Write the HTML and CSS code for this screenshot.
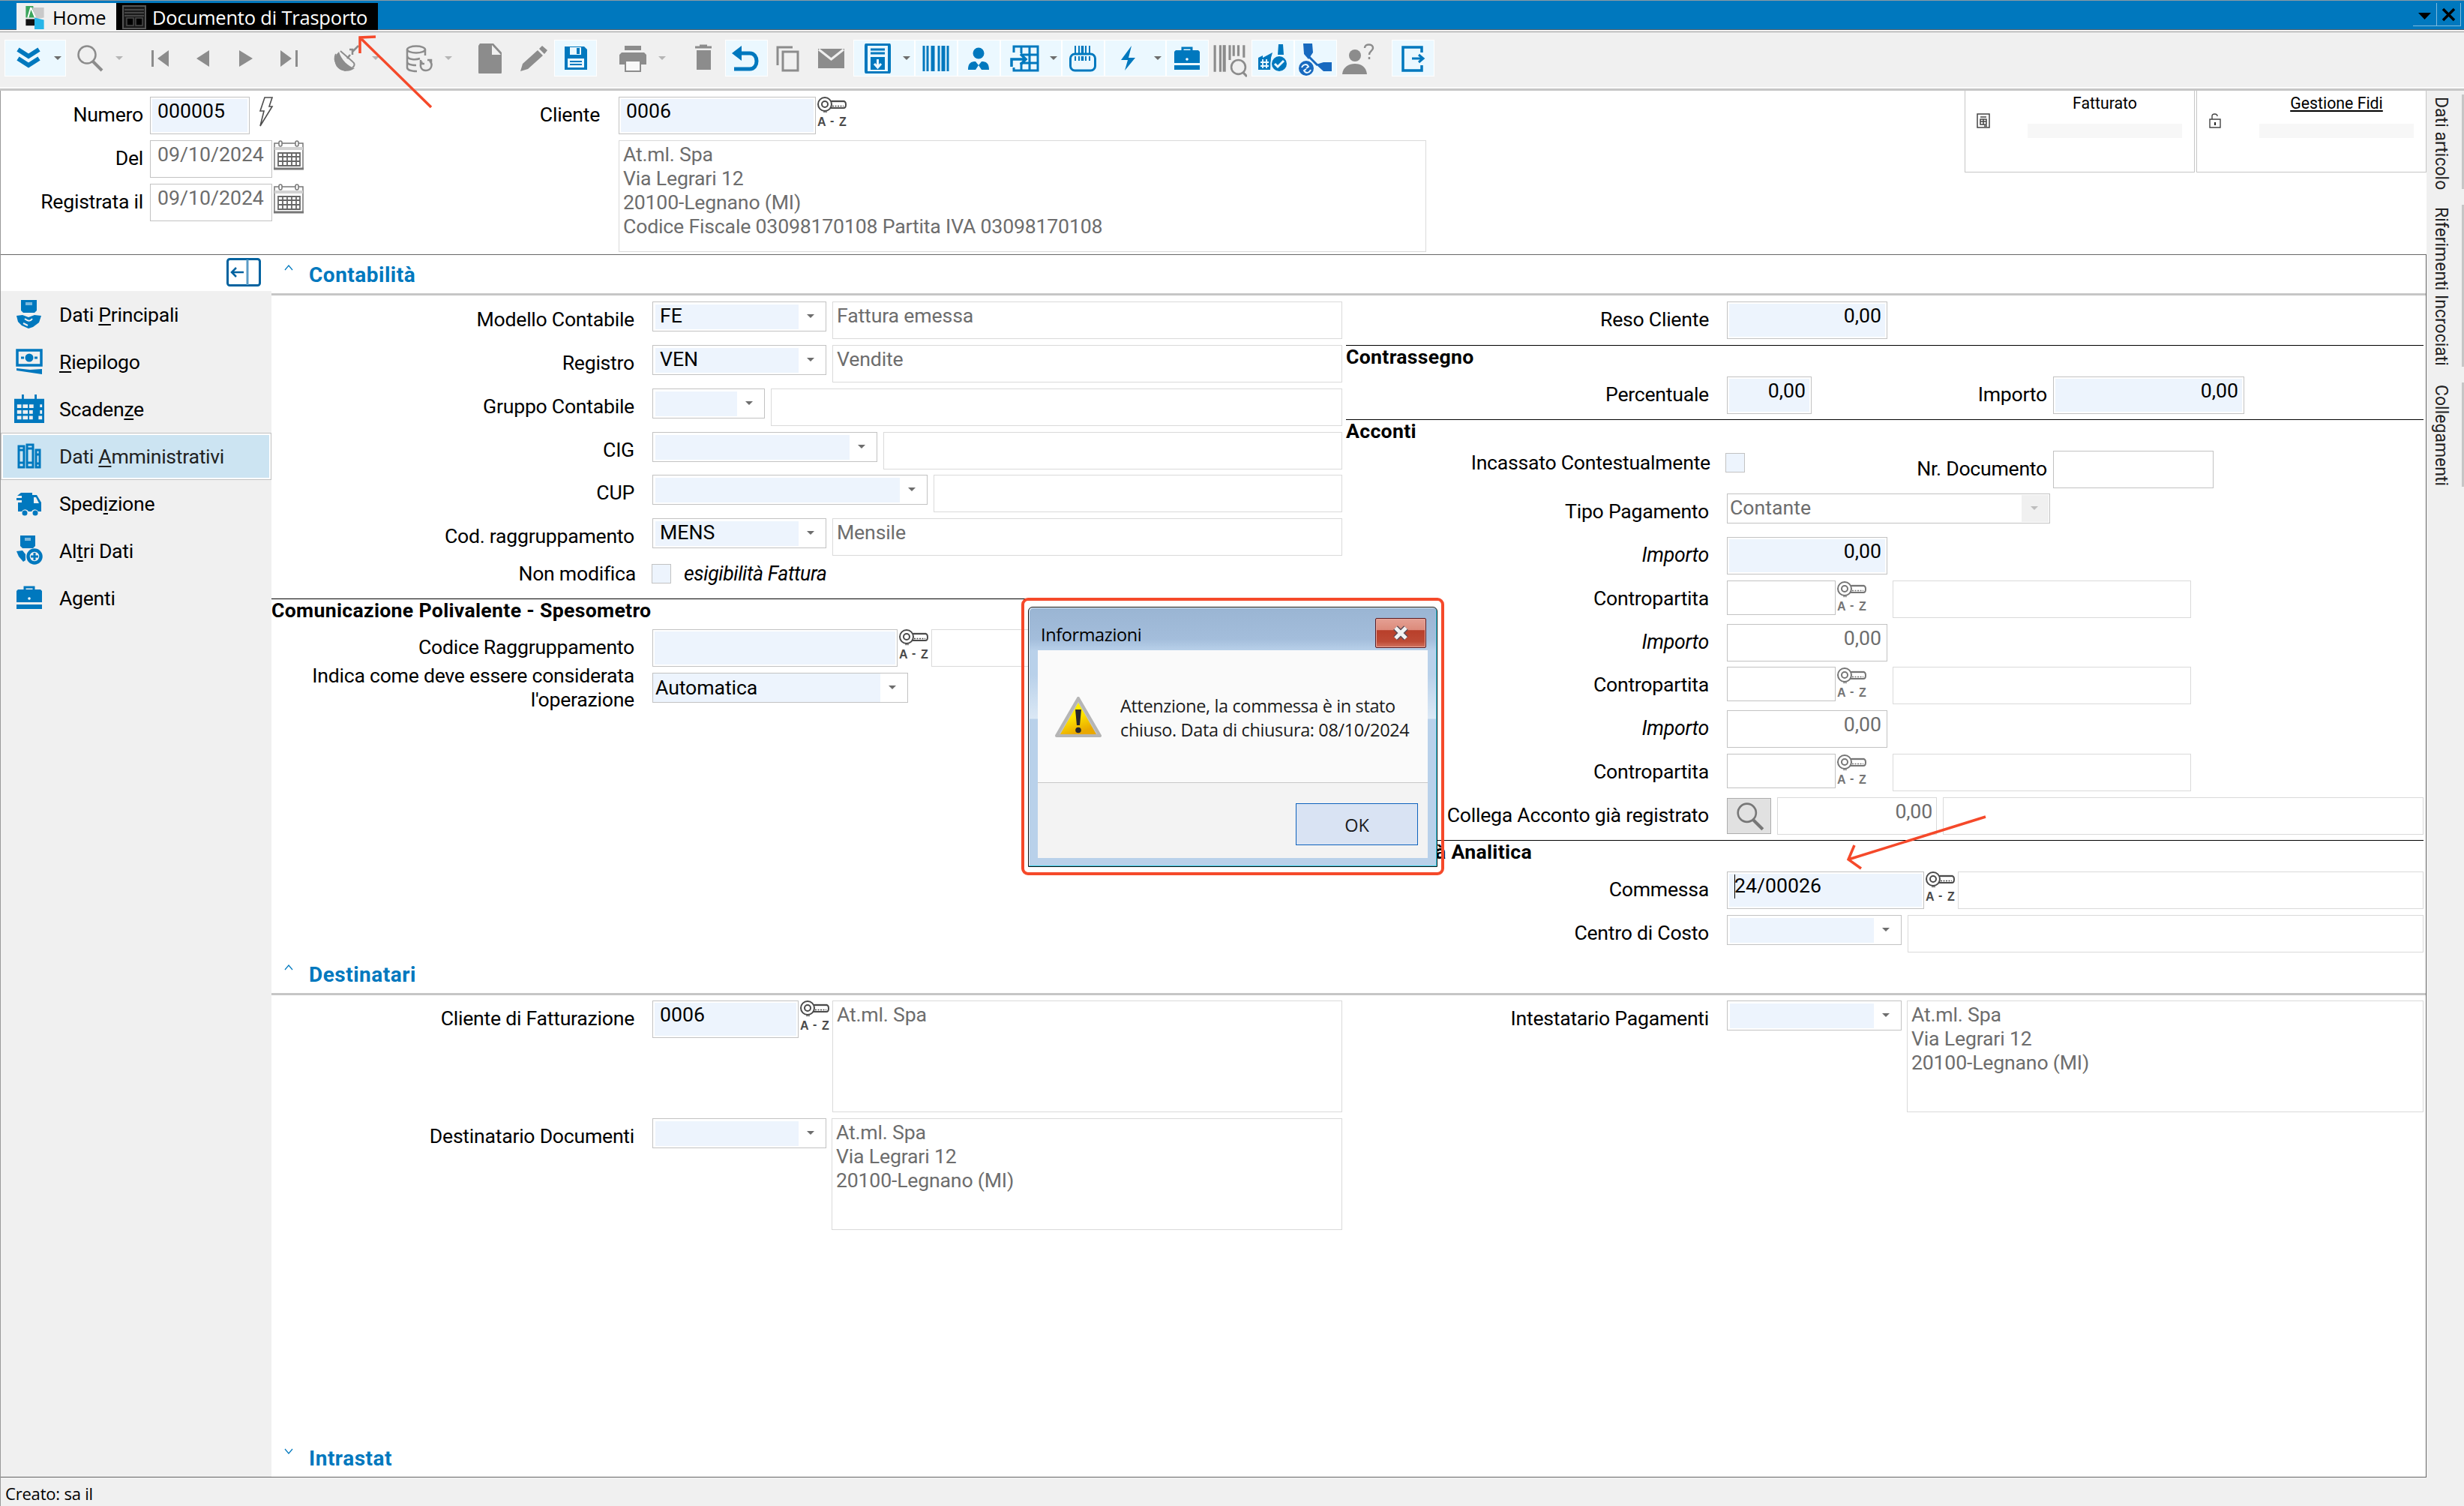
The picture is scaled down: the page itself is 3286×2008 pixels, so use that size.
FILE: index.html
```html
<!DOCTYPE html>
<html lang="it">
<head>
  <meta charset="UTF-8" />
  <title>Documento di Trasporto</title>
  <link rel="stylesheet" href="styles.css">
</head>
<body>

  <!-- icon sprites -->
  <svg class="sprites" width="0" height="0">
    <symbol id="i-chevrons" viewBox="0 0 40 40"><path d="M6 8l14 9 14-9M6 20l14 9 14-9" fill="none" stroke="currentColor" stroke-width="6"/></symbol>
    <symbol id="i-search" viewBox="0 0 40 40"><circle cx="16" cy="15" r="11.5" fill="none" stroke="currentColor" stroke-width="2.5"/><path d="M24 24l12 12" stroke="currentColor" stroke-width="4"/></symbol>
    <symbol id="i-first" viewBox="0 0 40 40"><path d="M8 9h3v22H8zM31 9v22L16 20z" fill="currentColor"/></symbol>
    <symbol id="i-prev" viewBox="0 0 40 40"><path d="M28 9v22L11 20z" fill="currentColor"/></symbol>
    <symbol id="i-next" viewBox="0 0 40 40"><path d="M11 9v22l18-11z" fill="currentColor"/></symbol>
    <symbol id="i-last" viewBox="0 0 40 40"><path d="M29 9h3v22h-3zM9 9v22l15-11z" fill="currentColor"/></symbol>
    <symbol id="i-dish" viewBox="0 0 40 40"><path d="M10 11C2 18 3 30 12 35c7 3 14 2 19-2-8-2-18-11-21-22z" fill="currentColor"/><path d="M6 14c-4 9 2 20 13 22M12 10l16 14c4 3 3 6 0 8" fill="none" stroke="currentColor" stroke-width="2"/><path d="M21 20l4-5M24 8l4 0 0 7M28 11l8-8" fill="none" stroke="currentColor" stroke-width="2.5"/></symbol>
    <symbol id="i-db" viewBox="0 0 40 40"><g fill="none" stroke="currentColor" stroke-width="2.5"><ellipse cx="16" cy="8" rx="12" ry="4.500"/><path d="M4 8v24c0 3 5 5 13 5M28 8v8M4 16c0 6 12 6 17 4M4 24c0 4 6 5 12 5"/><path d="M24 24c-4 5-2 12 5 12s10-8 5-13M22 22v5h5M36 27v-5h-5"/></g></symbol>
    <symbol id="i-file" viewBox="0 0 40 40"><path d="M6 0h18l11 12v26a3 3 0 0 1-3 3H7a3 3 0 0 1-3-3V3z" fill="currentColor"/><path d="M22 2v13h12z" fill="#f0f0f0"/></symbol>
    <symbol id="i-pencil" viewBox="0 0 40 40"><path d="M3 37l3-10L26 9l7 7-20 18zM28 7l4-4 7 6-4 5z" fill="currentColor"/></symbol>
    <symbol id="i-save" viewBox="0 0 40 40"><path d="M5 4h26l4 4v27H5z" fill="currentColor"/><path d="M12 5h15v10H12zM9 20h22v12H9z" fill="#ebf8ff"/><path d="M21 6h4v8h-4zM12 23h16v2H12zM12 27h16v2H12z" fill="currentColor"/></symbol>
    <symbol id="i-print" viewBox="0 0 40 40"><path d="M9 3h22v6H9zM5 12h30l3 3v13h-7v-6H9v6H2V15z" fill="currentColor"/><path d="M10 23h20v14H10z" fill="#f8f8f8" stroke="currentColor" stroke-width="2"/></symbol>
    <symbol id="i-trash" viewBox="0 0 40 40"><path d="M9 5h22M15 3h10" stroke="currentColor" stroke-width="3"/><path d="M11 9h19v26H11z" fill="currentColor"/></symbol>
    <symbol id="i-undo" viewBox="0 0 40 40"><path d="M8 13h17c12 0 12 21 0 21H4" fill="none" stroke="currentColor" stroke-width="5"/><path d="M14 3v20L1 13z" fill="currentColor"/></symbol>
    <symbol id="i-copy" viewBox="0 0 40 40"><path d="M5 29V5h20M12 11h20v25H12z" fill="none" stroke="currentColor" stroke-width="3"/></symbol>
    <symbol id="i-mail" viewBox="0 0 40 40"><path d="M2 7h35v26H2z" fill="currentColor"/><path d="M3 8l16.500 13L36 8" fill="none" stroke="#f0f0f0" stroke-width="3"/></symbol>
    <symbol id="i-form" viewBox="0 0 40 40"><rect x="5" y="1" width="31" height="38" rx="2" fill="none" stroke="currentColor" stroke-width="4"/><path d="M11 8h19M11 13h19" stroke="currentColor" stroke-width="3"/><path d="M11 18h19v17H11z" fill="currentColor"/><path d="M20.500 21v10M16 27l4.500 5 4.500-5" stroke="#ebf8ff" stroke-width="3" fill="none"/></symbol>
    <symbol id="i-barcode" viewBox="0 0 40 40"><path d="M4 3v34M9 3v34M24 3v34M36 3v34" stroke="currentColor" stroke-width="3"/><path d="M16 3v34M30 3v34" stroke="currentColor" stroke-width="5"/></symbol>
    <symbol id="i-person" viewBox="0 0 40 40"><ellipse cx="20" cy="13" rx="7.500" ry="7.500" fill="currentColor"/><path d="M6 35c0-9 4-11 10-11l4 5 4-5c6 0 10 2 10 11H24l-4-6-4 6z" fill="currentColor"/></symbol>
    <symbol id="i-grid" viewBox="0 0 40 40"><path d="M6 12V4h32v32H6v-4M16 4v9M27 4v32M38 15H15M38 26H17M16 25v11" fill="none" stroke="currentColor" stroke-width="3"/><path d="M3 31V21h18M15 14l7 7-7 7" fill="none" stroke="currentColor" stroke-width="3.500"/></symbol>
    <symbol id="i-bag" viewBox="0 0 40 40"><path d="M10 3v11M15 3v11M24 3v11M29 3v11M10 17v6M15 17v6M24 17v6M29 17v6" stroke="currentColor" stroke-width="2"/><path d="M19.500 3v11M19.500 17v6" stroke="currentColor" stroke-width="3.500"/><rect x="3.500" y="14" width="33" height="22" rx="6" fill="none" stroke="currentColor" stroke-width="3"/></symbol>
    <symbol id="i-bolt" viewBox="0 0 40 40"><path d="M24 3L10 22h9l-4 14 14-17h-9z" fill="currentColor"/></symbol>
    <symbol id="i-case" viewBox="0 0 40 40"><path d="M14 10V6h12v4" fill="none" stroke="currentColor" stroke-width="3"/><path d="M5 9h30l2 2v15H3V11zM3 29h34v6H3z" fill="currentColor"/><circle cx="20" cy="21" r="1.800" fill="#fff"/></symbol>
    <symbol id="i-barsearch" viewBox="0 0 44 44"><path d="M3 3v34M10 3v34M22 3v19M27 3v14M33 3v14M40 3v16" stroke="currentColor" stroke-width="3"/><path d="M15 3v34" stroke="currentColor" stroke-width="4"/><circle cx="33" cy="31" r="9" fill="#f0f0f0" stroke="currentColor" stroke-width="2.500"/><path d="M39 38l5 5" stroke="currentColor" stroke-width="3"/></symbol>
    <symbol id="i-factory" viewBox="0 0 40 40"><path d="M1 35V19l6-3v3l13-7-2 7-1 16zM28 1h6l1 14h-8z" fill="currentColor"/><path d="M4 25h11M4 30h11M7 21v12M12 21v12" stroke="#ebf8ff" stroke-width="1.800"/><circle cx="29" cy="27" r="11.500" fill="#ebf8ff"/><circle cx="29" cy="27" r="10" fill="currentColor"/><path d="M23 27l4 4 8-8" fill="none" stroke="#ebf8ff" stroke-width="3"/></symbol>
    <symbol id="i-flow" viewBox="0 0 46 46"><path d="M7 1h12l1 12-6 9-6-7z" fill="currentColor"/><path d="M24 29l10-3h11v12H34z" fill="currentColor"/><path d="M14 18l12 12" stroke="currentColor" stroke-width="3"/><circle cx="11" cy="34" r="10" fill="currentColor"/><path d="M5 33c2-5 7-5 9-1l-3 2M17 36c-2 5-7 5-9 1l3-2" fill="none" stroke="#ebf8ff" stroke-width="2"/></symbol>
    <symbol id="i-ask" viewBox="0 0 46 44"><circle cx="19" cy="16" r="8" fill="currentColor"/><path d="M2 41c1-10 9-14 17-14s15 4 16 14z" fill="currentColor"/><path d="M32 6c0-6 11-6 11 0 0 4-5 4-5 9M38 18v3" fill="none" stroke="currentColor" stroke-width="2.500"/></symbol>
    <symbol id="i-exit" viewBox="0 0 40 40"><path d="M32 12V5H7v31h25v-7" fill="none" stroke="currentColor" stroke-width="3.500"/><path d="M19 20h14M28 15l6 5-6 5" fill="none" stroke="currentColor" stroke-width="3"/></symbol>

    <symbol id="i-key" viewBox="0 0 40 40"><g fill="none" stroke="currentColor" stroke-width="2"><circle cx="10" cy="10" r="9"/><circle cx="10" cy="10" r="4"/><path d="M18 6h17c4 0 4 9 0 9H18"/></g><path d="M19 6h17M8 20h5" stroke="currentColor" stroke-width="2.500" opacity="0.600"/><path d="M20 12.500h15" stroke="currentColor" stroke-width="1.500" stroke-dasharray="2 1.500"/><text x="0" y="39" class="key-text">A</text><text x="17" y="37" class="key-text">-</text><text x="29" y="39" class="key-text">Z</text></symbol>
    <symbol id="i-flash" viewBox="0 0 20 40"><path d="M8 1h10l-4 12h4L2 39l5-20H2z" fill="none" stroke="#4d4d4d" stroke-width="1.600"/></symbol>
    <symbol id="i-date" viewBox="0 0 40 40"><path d="M1 4h38v34H1z" fill="#fff" stroke="#777" stroke-width="1.500"/><path d="M1 9h38v4H1z" fill="#d2d2d2"/><path d="M0 38h40" stroke="#777" stroke-width="3"/><rect x="7" y="1" width="4" height="7" rx="2" fill="#fff" stroke="#777" stroke-width="1.500"/><rect x="29" y="1" width="4" height="7" rx="2" fill="#fff" stroke="#777" stroke-width="1.500"/><path d="M6 17h29v17H6zM6 22h29M6 28h29M12 17v17M18 17v17M24 17v17M30 17v17" fill="none" stroke="#666" stroke-width="1.800"/></symbol>

    <symbol id="n-main" viewBox="0 0 40 40"><path d="M9 1h21v14l-3 3H12l-3-3z" fill="currentColor"/><path d="M15 4h9v4h-9z" fill="#7db9de"/><path d="M3 22l8-1 8 3 8-3 9 1-3 9-8 6-6 2-9-4-5-5z" fill="currentColor"/><path d="M14 26c5 4 8 3 10 0M12 32l6 3" stroke="#f0f0f0" stroke-width="2" fill="none"/></symbol>
    <symbol id="n-cash" viewBox="0 0 40 40"><path d="M4 5h32v20H4z" fill="none" stroke="currentColor" stroke-width="3.500"/><circle cx="20" cy="15" r="5.500" fill="currentColor"/><path d="M9 15h4M27 15h4" stroke="currentColor" stroke-width="3"/><path d="M3 29l18 2 16-1v7L3 32z" fill="currentColor"/></symbol>
    <symbol id="n-cal" viewBox="0 0 42 42"><path d="M0 7h42v34H0z" fill="currentColor"/><path d="M12 1v8M30 1v8" stroke="currentColor" stroke-width="3"/><path d="M4 15h6v5H4zM12 15h7v5h-7zM21 15h6v5h-6zM4 23h6v5H4zM12 23h7v5h-7zM21 23h5v5h-5zM4 31h6v5H4zM12 31h7v5h-7zM21 31h5v5h-5zM36 15h3v4h-3zM36 23h3v5h-3zM34 31h5v5h-5z" fill="#f0f0f0"/></symbol>
    <symbol id="n-binders" viewBox="0 0 40 40"><g fill="none" stroke="currentColor" stroke-width="3"><path d="M6 7h7v28H6zM17 5h8v30h-8z"/><path d="M29 12h5v23h-5z"/></g><path d="M6 12h7M6 29h7M17 10h8M17 29h8M29 18h5M29 30h5" stroke="currentColor" stroke-width="3"/></symbol>
    <symbol id="n-truck" viewBox="0 0 40 40"><path d="M9 6h15v3h6l6 10v12h-4a5 5 0 0 0-9 0h-4a5 5 0 0 0-9 0H5V19h5v-3H3v-3h7v-3H4z" fill="currentColor"/><path d="M26 12h3l4 8h-7z" fill="#f0f0f0"/><circle cx="14" cy="33" r="3.500" fill="currentColor"/><circle cx="28" cy="33" r="3.500" fill="currentColor"/></symbol>
    <symbol id="n-other" viewBox="0 0 40 40"><path d="M8 0h20v14l-3 3H11l-3-3z" fill="currentColor"/><path d="M14 3h8v4h-8z" fill="#7db9de"/><path d="M3 21l8-1 4 5v8l-3 2-6-7z" fill="currentColor"/><circle cx="27" cy="28" r="8.500" fill="#f0f0f0" stroke="currentColor" stroke-width="4.500"/><path d="M27 23v10M22 28h10" stroke="currentColor" stroke-width="3"/></symbol>
  </svg>

  <div class="titlebar">
    <div class="tab tab-home">
      <svg class="logo" viewBox="0 0 25 32"><path d="M0 0h10l6 16H0z" fill="#3ca55c"/><path d="M9 2h16v14l-12 2z" fill="#c9c9c9"/><path d="M7 2l-4 14M7 2l6 14" stroke="#fff" stroke-width="2"/><path d="M0 18h12v9H0z" fill="#111"/><path d="M12 16l13 3v13H12z" fill="#27b5e8"/></svg>
      Home
    </div>
    <div class="tab tab-doc">
      <svg class="tab-icon" viewBox="0 0 32 32"><path d="M1 1h30v30H1z" fill="#1a1a1a" stroke="#555" stroke-width="2"/><path d="M3 6h26M3 10h26M3 14h26" stroke="#555" stroke-width="1.500"/><path d="M6 17h9v10H6zM18 17h9v10h-9z" fill="#000" stroke="#4a4a4a" stroke-width="1.500"/></svg>
      Documento di Trasporto
    </div>
    <div class="window-buttons">
      <span class="win-btn"><svg viewBox="0 0 30 30"><path d="M7 13h17l-8.500 9z" fill="#000"/></svg></span>
      <span class="win-btn"><svg viewBox="0 0 30 30"><path d="M8 8l15 15M23 8L8 23" stroke="#000" stroke-width="3.500"/></svg></span>
    </div>
  </div>

  <div class="toolbar">
    <span class="tool on drop"><svg><use href="#i-chevrons"/></svg></span>
    <span class="tool drop"><svg><use href="#i-search"/></svg></span>
    <span class="sep"></span>
    <span class="tool"><svg><use href="#i-first"/></svg></span>
    <span class="tool"><svg><use href="#i-prev"/></svg></span>
    <span class="tool"><svg><use href="#i-next"/></svg></span>
    <span class="tool"><svg><use href="#i-last"/></svg></span>
    <span class="sep"></span>
    <span class="tool drop"><svg><use href="#i-dish"/></svg></span>
    <span class="sep"></span>
    <span class="tool drop"><svg><use href="#i-db"/></svg></span>
    <span class="sep"></span>
    <span class="tool"><svg><use href="#i-file"/></svg></span>
    <span class="tool"><svg><use href="#i-pencil"/></svg></span>
    <span class="tool on"><svg><use href="#i-save"/></svg></span>
    <span class="sep"></span>
    <span class="tool drop"><svg><use href="#i-print"/></svg></span>
    <span class="sep"></span>
    <span class="tool"><svg><use href="#i-trash"/></svg></span>
    <span class="tool on"><svg><use href="#i-undo"/></svg></span>
    <span class="tool"><svg><use href="#i-copy"/></svg></span>
    <span class="tool"><svg><use href="#i-mail"/></svg></span>
    <span class="tool on drop"><svg><use href="#i-form"/></svg></span>
    <span class="tool on"><svg><use href="#i-barcode"/></svg></span>
    <span class="tool on"><svg><use href="#i-person"/></svg></span>
    <span class="tool on drop"><svg><use href="#i-grid"/></svg></span>
    <span class="tool on"><svg><use href="#i-bag"/></svg></span>
    <span class="tool on drop"><svg><use href="#i-bolt"/></svg></span>
    <span class="tool on"><svg><use href="#i-case"/></svg></span>
    <span class="tool"><svg class="wide"><use href="#i-barsearch"/></svg></span>
    <span class="tool on"><svg><use href="#i-factory"/></svg></span>
    <span class="tool on flow"><svg class="wide"><use href="#i-flow"/></svg></span>
    <span class="tool"><svg class="wide"><use href="#i-ask"/></svg></span>
    <span class="sep"></span>
    <span class="tool on"><svg><use href="#i-exit"/></svg></span>
  </div>

  <div class="workspace">
    <div class="page">

      <!-- document header -->
      <div class="doc-header">
        <div class="head-left">
          <div class="row">
            <label>Numero</label>
            <div class="field w-num">000005</div>
            <svg class="flash"><use href="#i-flash"/></svg>
          </div>
          <div class="row">
            <label>Del</label>
            <div class="field off w-date">09/10/2024</div>
            <svg class="icon"><use href="#i-date"/></svg>
          </div>
          <div class="row">
            <label>Registrata il</label>
            <div class="field off w-date">09/10/2024</div>
            <svg class="icon"><use href="#i-date"/></svg>
          </div>
        </div>
        <div class="head-client">
          <div class="row">
            <label>Cliente</label>
            <div class="field w-client">0006</div>
            <svg class="icon"><use href="#i-key"/></svg>
          </div>
          <div class="memo memo-client">At.ml. Spa<br>Via Legrari 12<br>20100-Legnano (MI)<br>Codice Fiscale 03098170108 Partita IVA 03098170108</div>
        </div>
        <div class="cards">
          <div class="card">
            <svg class="card-icon" viewBox="0 0 18 20"><path d="M1 1h16v18H1z" fill="#fff" stroke="#444" stroke-width="1.500"/><path d="M5 5h8M5 8h8v7H5zM5 11h8M9 8v7M10 17h4" fill="none" stroke="#444" stroke-width="1.500"/></svg>
            <div class="card-body"><span>Fatturato</span><i></i></div>
          </div>
          <div class="card">
            <svg class="card-icon" viewBox="0 0 18 20"><path d="M2 8h14v11H2zM5 8V4c0-4 7-4 7 0" fill="none" stroke="#444" stroke-width="1.400"/><path d="M9 12v4" stroke="#222" stroke-width="2"/></svg>
            <div class="card-body"><span class="link">Gestione Fidi</span><i></i></div>
          </div>
        </div>
      </div>

      <div class="panel">
        <div class="sidebar">
          <div class="side-top">
            <svg viewBox="0 0 46 38"><rect x="1.500" y="1.500" width="43" height="35" rx="3" fill="#fff" stroke="#00629f" stroke-width="3"/><path d="M28 2v34" stroke="#5b9cc6" stroke-width="3"/><path d="M23 19H8M13 13l-6 6 6 6" fill="none" stroke="#00629f" stroke-width="2.500"/></svg>
          </div>
          <div class="nav-item"><svg><use href="#n-main"/></svg><span>Dati <u>P</u>rincipali</span></div>
          <div class="nav-item"><svg><use href="#n-cash"/></svg><span><u>R</u>iepilogo</span></div>
          <div class="nav-item"><svg><use href="#n-cal"/></svg><span>Scaden<u>z</u>e</span></div>
          <div class="nav-item active"><svg><use href="#n-binders"/></svg><span>Dati <u>A</u>mministrativi</span></div>
          <div class="nav-item"><svg><use href="#n-truck"/></svg><span>Sped<u>i</u>zione</span></div>
          <div class="nav-item"><svg><use href="#n-other"/></svg><span>Al<u>t</u>ri Dati</span></div>
          <div class="nav-item"><svg><use href="#i-case"/></svg><span>A<u>g</u>enti</span></div>
        </div>

        <div class="content">
          <div class="section-title"><svg viewBox="0 0 12 8"><path d="M1 7l5-6 5 6"/></svg>Contabilità</div>
          <div class="columns contab">

            <div class="col-left">
              <div class="row">
                <label>Modello Contabile</label>
                <div class="combo w-code"><span>FE</span></div>
                <div class="desc">Fattura emessa</div>
              </div>
              <div class="row">
                <label>Registro</label>
                <div class="combo w-code"><span>VEN</span></div>
                <div class="desc">Vendite</div>
              </div>
              <div class="row">
                <label>Gruppo Contabile</label>
                <div class="combo w-group"><span></span></div>
                <div class="desc"></div>
              </div>
              <div class="row">
                <label>CIG</label>
                <div class="combo w-cig"><span></span></div>
                <div class="desc"></div>
              </div>
              <div class="row">
                <label>CUP</label>
                <div class="combo w-cup"><span></span></div>
                <div class="desc"></div>
              </div>
              <div class="row">
                <label>Cod. raggruppamento</label>
                <div class="combo w-code"><span>MENS</span></div>
                <div class="desc">Mensile</div>
              </div>
              <div class="row check-row">
                <label>Non modifica</label>
                <div class="check"></div>
                <em>esigibilità Fattura</em>
              </div>
              <h3>Comunicazione Polivalente - Spesometro</h3>
              <div class="row">
                <label>Codice Raggruppamento</label>
                <div class="field w-ragg"></div>
                <svg class="icon"><use href="#i-key"/></svg>
                <div class="desc tight"></div>
              </div>
              <div class="row">
                <label class="two-lines">Indica come deve essere considerata l'operazione</label>
                <div class="combo flat w-auto"><span>Automatica</span></div>
              </div>
            </div>

            <div class="col-right">
              <div class="row">
                <label>Reso Cliente</label>
                <div class="field num w-amount">0,00</div>
              </div>
              <h3>Contrassegno</h3>
              <div class="row">
                <label>Percentuale</label>
                <div class="pair"><div class="field num w-perc">0,00</div><label class="inner">Importo</label></div>
                <div class="field num w-tot">0,00</div>
              </div>
              <h3>Acconti</h3>
              <div class="row">
                <label class="raised">Incassato Contestualmente</label>
                <div class="pair"><div class="check"></div><label class="inner">Nr. Documento</label></div>
                <div class="field off w-nrdoc"></div>
              </div>
              <div class="row">
                <label>Tipo Pagamento</label>
                <div class="combo off w-pay"><span>Contante</span></div>
              </div>
              <div class="row">
                <label><em>Importo</em></label>
                <div class="field num w-amount">0,00</div>
              </div>
              <div class="row">
                <label>Contropartita</label>
                <div class="field off short w-contro"></div>
                <svg class="icon pale"><use href="#i-key"/></svg>
                <div class="desc w-contro-desc"></div>
              </div>
              <div class="row">
                <label><em>Importo</em></label>
                <div class="field off num w-amount">0,00</div>
              </div>
              <div class="row">
                <label>Contropartita</label>
                <div class="field off short w-contro"></div>
                <svg class="icon pale"><use href="#i-key"/></svg>
                <div class="desc w-contro-desc"></div>
              </div>
              <div class="row">
                <label><em>Importo</em></label>
                <div class="field off num w-amount">0,00</div>
              </div>
              <div class="row">
                <label>Contropartita</label>
                <div class="field off short w-contro"></div>
                <svg class="icon pale"><use href="#i-key"/></svg>
                <div class="desc w-contro-desc"></div>
              </div>
              <div class="row">
                <label>Collega Acconto già registrato</label>
                <div class="search-btn"><svg><use href="#i-search"/></svg></div>
                <div class="desc num w-linked">0,00</div>
                <div class="desc"></div>
              </div>
              <h3>Contabilità Analitica</h3>
              <div class="row">
                <label>Commessa</label>
                <div class="field w-job"><b class="caret"></b>24/00026</div>
                <svg class="icon"><use href="#i-key"/></svg>
                <div class="desc tight"></div>
              </div>
              <div class="row">
                <label>Centro di Costo</label>
                <div class="combo w-code"><span></span></div>
                <div class="desc"></div>
              </div>
            </div>
          </div>

          <div class="section-title"><svg viewBox="0 0 12 8"><path d="M1 7l5-6 5 6"/></svg>Destinatari</div>
          <div class="columns dest">
            <div class="col-left">
              <div class="row tall">
                <label>Cliente di Fatturazione</label>
                <div class="field w-bill">0006</div>
                <svg class="icon"><use href="#i-key"/></svg>
                <div class="memo bill-memo">At.ml. Spa</div>
              </div>
              <div class="row tall">
                <label>Destinatario Documenti</label>
                <div class="combo w-code"><span></span></div>
                <div class="memo spaced">At.ml. Spa<br>Via Legrari 12<br>20100-Legnano (MI)</div>
              </div>
            </div>
            <div class="col-right">
              <div class="row tall">
                <label>Intestatario Pagamenti</label>
                <div class="combo w-code"><span></span></div>
                <div class="memo spaced">At.ml. Spa<br>Via Legrari 12<br>20100-Legnano (MI)</div>
              </div>
            </div>
          </div>

          <div class="section-title last"><svg viewBox="0 0 12 8"><path d="M1 1l5 6 5-6"/></svg>Intrastat</div>
        </div>
      </div>
    </div>

    <div class="side-tabs">
      <span class="t1">Dati articolo</span>
      <span class="t2">Riferimenti Incrociati</span>
      <span class="t3">Collegamenti</span>
    </div>
  </div>

  <div class="statusbar">Creato: sa il</div>

  <!-- message box -->
  <div class="highlight">
    <div class="dialog">
      <div class="dialog-title">
        <span>Informazioni</span>
        <div class="dialog-close"><svg viewBox="0 0 24 20"><path d="M5 3l14 14M19 3L5 17" stroke="#5c4a55" stroke-width="8"/><path d="M5 3l14 14M19 3L5 17" stroke="#f2f2f2" stroke-width="5"/></svg></div>
      </div>
      <div class="dialog-body">
        <svg class="warn" viewBox="0 0 62 56">
          <defs><linearGradient id="wg" x1="0" y1="0" x2="0.4" y2="1"><stop offset="0" stop-color="#fff200"/><stop offset="0.500" stop-color="#ffe600"/><stop offset="1" stop-color="#e9a800"/></linearGradient></defs>
          <path d="M31 2L60 52H2z" fill="#c4c4c4" stroke="#b5b5b5" stroke-width="4" stroke-linejoin="round"/>
          <path d="M31 8L55 50H7z" fill="url(#wg)"/>
          <path d="M27 17h8l-2 21h-4z" fill="#26262e"/><circle cx="31" cy="44.500" r="3.800" fill="#26262e"/>
        </svg>
        <p>Attenzione, la commessa è in stato<br>chiuso. Data di chiusura: 08/10/2024</p>
      </div>
      <div class="dialog-foot"><button>OK</button></div>
    </div>
  </div>

  <!-- pointer arrows -->
  <svg class="arrow arrow-tab" viewBox="0 0 110 110"><path d="M105 103L10 10M31 9L10 10V31"/></svg>
  <svg class="arrow arrow-job" viewBox="0 0 200 90"><path d="M193 9L10 66M18 47L10 66l17 12"/></svg>

</body>
</html>
```
FILE: styles.css
```css
* {
  box-sizing: border-box;
}

body {
  margin: 0;
  width: 3286px;
  height: 2008px;
  position: relative;
  display: flex;
  flex-direction: column;
  overflow: hidden;
  background: #f0f0f0;
  color: #000;
  font-family: Roboto, sans-serif;
  font-size: 26.67px;
  line-height: 32px;
}

.sprites {
  display: none;
}

/* title bar */
.titlebar {
  display: flex;
  flex: none;
  height: 42px;
  padding: 3px 4px 0 22px;
  background: #0078be;
  border-top: 1px solid #8f9aa2;
  border-bottom: 2px solid #f8f8f8;
  font-family: "Open Sans", sans-serif;
  font-size: 25.5px;
  box-shadow: inset 0 -1px #50616c;
}

.tab {
  display: flex;
  align-items: center;
  height: 36px;
  padding-top: 2px;
  white-space: nowrap;
}

.tab-home {
  width: 133px;
  padding-left: 12px;
  background: #f0f0f0;
  letter-spacing: -0.2px;
}

.tab-doc {
  width: 349px;
  padding-left: 8px;
  background: #000;
  color: #fff;
  letter-spacing: -0.2px;
}

.logo {
  width: 25px;
  height: 31px;
  margin-right: 11px;
}

.tab-icon {
  width: 32px;
  height: 32px;
  margin-right: 8px;
}

.window-buttons {
  display: flex;
  margin-left: auto;
}

.win-btn {
  width: 32px;
  height: 31px;
  border-right: 1px solid #7fbbde;
  border-bottom: 1px solid #7fbbde;
}

.win-btn svg {
  width: 30px;
  height: 30px;
}

/* toolbar */
.toolbar {
  display: flex;
  flex: none;
  height: 79px;
  padding: 10px 0 0 6px;
  border-top: 1px solid #999;
  border-bottom: 3px solid #c6c6c6;
  box-shadow: inset 0 -2px #fafafa;
}

.tool {
  display: flex;
  align-items: center;
  justify-content: center;
  width: 57px;
  height: 49px;
  border: 1px solid transparent;
  color: #8c8c8c;
}

.tool svg {
  flex: none;
  width: 40px;
  height: 40px;
}

.tool svg.wide {
  width: 46px;
  height: 46px;
  margin-top: 4px;
}

.tool.on {
  background: #ebf8ff;
  border-color: #fff;
  color: #0078be;
}

.tool.flow {
  color: #1769bf;
}

.tool.drop {
  width: 82px;
  justify-content: flex-start;
  padding-left: 11px;
}

.tool.drop::after {
  content: "";
  margin-left: 14px;
  border: 5px solid transparent;
  border-top-color: #b5b5b5;
  border-bottom: 0;
}

.tool.on.drop::after {
  border-top-color: #6d6d6d;
}

.sep {
  width: 15.8px;
}

/* layout */
.workspace {
  display: flex;
  flex: none;
  height: 1849px;
}

.page {
  width: 3236px;
  border-left: 1px solid #999;
  background: #fff;
}

/* form pieces */
.row {
  display: flex;
  align-items: flex-start;
  height: 57.75px;
}

.row label {
  flex: none;
  width: 484px;
  margin-right: 24px;
  padding-top: 8px;
  text-align: right;
  letter-spacing: -0.27px;
  white-space: nowrap;
}

.field {
  position: relative;
  flex: none;
  height: 50px;
  padding: 2px 9px;
  border: 1px solid #c2c2c2;
  box-shadow: inset 0 0 0 2px #fff;
  background: #edf4fd;
}

.field.short {
  height: 46px;
}

.field.off {
  background: #fff;
  color: #6d6d6d;
}

.num {
  text-align: right;
}

.field.num {
  padding-right: 7px;
}

.combo {
  position: relative;
  flex: none;
  display: flex;
  height: 40px;
  padding: 3px 36px 2px 3px;
  border: 1px solid #c2c2c2;
}

.combo span {
  flex: 1;
  padding-left: 6px;
  line-height: 30px;
  background: #edf4fd;
}

.combo::after {
  content: "";
  position: absolute;
  right: 15px;
  top: 16px;
  border: 5px solid transparent;
  border-top-color: #6d6d6d;
  border-bottom: 0;
}

.combo.flat {
  padding: 0 36px 0 0;
}

.combo.flat span {
  padding: 4px 0 0 3px;
  letter-spacing: -0.1px;
}

.combo.off {
  padding: 1px 1px 1px 0;
  color: #6d6d6d;
}

.combo.off span {
  padding: 2px 0 0 3px;
  background: #fff;
  border-right: 36px solid #f0f0f0;
}

.combo.off::after {
  border-top-color: #bdbdbd;
}

.desc {
  flex: 1;
  height: 50px;
  margin-left: 8px;
  padding: 2px 5px;
  border: 1px solid #dadada;
  color: #6d6d6d;
  letter-spacing: -0.15px;
}

.desc.tight {
  margin-left: 3px;
}

.memo {
  flex: 1;
  height: 149px;
  padding: 2px 5px;
  border: 1px solid #dadada;
  color: #6d6d6d;
  letter-spacing: -0.19px;
}

.memo.spaced {
  margin-left: 7px;
}

.check {
  width: 26px;
  height: 26px;
  margin: 3px 0 0 -2px;
  border: 1px solid #c2c2c2;
  background: #edf4fd;
}

.icon {
  flex: none;
  width: 40px;
  height: 40px;
  margin-left: 2px;
  color: #4a4a4a;
}

.icon.pale {
  margin-top: 1px;
  color: #757575;
}

.key-text {
  font: bold 16px "Liberation Sans", sans-serif;
  fill: currentColor;
}

h3 {
  height: 41.4px;
  margin: 0;
  padding-top: 0;
  border-top: 1px solid #000;
  font-size: 26.67px;
  font-weight: 700;
  line-height: 30px;
  letter-spacing: 0.3px;
  white-space: nowrap;
}

/* document header */
.doc-header {
  display: flex;
  height: 218px;
  padding-top: 8px;
}

.doc-header .row {
  height: 58px;
}

.head-left {
  width: 623px;
}

.head-left label {
  width: 190px;
  margin-right: 9px;
}

.head-client {
  width: 1278px;
}

.head-client label {
  width: 176px;
  margin-right: 25px;
}

.flash {
  width: 20px;
  height: 40px;
  margin-left: 12px;
}

.memo-client {
  margin-left: 201px;
}

.w-num { width: 133px; }
.w-date { width: 163px; }
.w-client { width: 263px; }

.cards {
  display: flex;
  gap: 2px;
  margin: -9px 0 0 auto;
}

.card {
  display: flex;
  width: 307px;
  height: 110px;
  padding: 5px 15px 0;
  border: 1px solid #c6c6c6;
}

.card-icon {
  width: 18px;
  height: 20px;
  margin-top: 25px;
}

.card-body {
  display: flex;
  flex-direction: column;
  align-items: center;
  width: 206px;
  margin-left: 50px;
  font-size: 21.3px;
  line-height: 24px;
}

.card-body i {
  width: 206px;
  height: 19px;
  margin-top: 15px;
  background: #f7f7f7;
}

.link {
  text-decoration: underline;
}

/* main panel */
.panel {
  display: flex;
  height: 1631px;
  border: 1px solid #666;
  border-left: 0;
}

.sidebar {
  flex: none;
  width: 361px;
  background: #f0f0f0;
}

.side-top {
  display: flex;
  justify-content: flex-end;
  height: 48px;
  padding: 4px 14px 0 0;
  background: #fff;
}

.side-top svg {
  width: 46px;
  height: 38px;
}

.nav-item {
  display: flex;
  align-items: center;
  height: 63px;
  padding: 0 0 2px 17px;
  border: 1px solid transparent;
}

.nav-item svg {
  width: 40px;
  height: 40px;
  margin-right: 20px;
  color: #0078be;
}

.nav-item span {
  padding-top: 2px;
  letter-spacing: -0.3px;
}

.nav-item u {
  text-underline-offset: 3px;
}

.nav-item.active {
  border-color: #c0c0c0;
  background: #cce4f2;
  box-shadow: inset 0 0 0 2px #fff;
  color: #222;
}

.content {
  flex: 1;
  min-width: 0;
}

.section-title {
  display: flex;
  height: 54px;
  padding: 11px 0 0 17px;
  border-bottom: 3px solid #c6c6c6;
  color: #0078be;
  font-size: 28px;
  font-weight: 700;
  letter-spacing: 0.5px;
}

.section-title svg {
  width: 12px;
  height: 8px;
  margin: 2px 21px 0 0;
  fill: none;
  stroke: #0078be;
  stroke-width: 1.2;
}

.section-title.last {
  border-bottom: 0;
}

.columns {
  display: flex;
}

.contab {
  height: 879px;
  padding-top: 8.4px;
}

.dest {
  height: 591px;
  padding-top: 7px;
}

.col-left {
  width: 1433px;
}

.col-left .row {
  padding-right: 5px;
}

.col-right {
  width: 1437px;
}

.row.tall {
  height: 157px;
}

.row.check-row {
  height: 49px;
}

.check-row label {
  padding-top: 0;
  width: 486px;
  margin-right: 23px;
}

.check-row .check {
  margin-right: 17px;
}

.check-row em {
  letter-spacing: -0.4px;
}

.row .two-lines {
  width: 450px;
  margin: -12px 24px 0 34px;
  padding: 0;
  white-space: normal;
}

.row label.raised {
  width: 486px;
  margin-right: 22px;
  padding-top: 0;
}

.pair {
  display: flex;
  justify-content: space-between;
  flex: none;
  width: 435px;
}

.row .inner {
  width: auto;
  margin-right: 8px;
}

.w-code { width: 233px; }
.col-left .w-code { width: 232px; }
.w-group { width: 150px; }
.w-cig { width: 300px; }
.w-cup { width: 367px; }
.w-ragg { width: 327px; }
.w-auto { width: 341px; }
.w-amount { width: 214px; }
.w-perc { width: 113px; }
.w-tot { width: 255px; }
.w-nrdoc { width: 214px; }
.w-pay { width: 431px; }
.w-contro { width: 145px; }
.w-job { width: 263px; }
.w-bill { width: 195px; }

.bill-memo {
  margin-left: 3px;
}

.w-contro-desc {
  flex: none;
  width: 398px;
  margin-left: 34px;
}

.w-linked {
  flex: none;
  width: 213px;
}

.search-btn {
  width: 59px;
  height: 48px;
  margin-top: 1px;
  padding: 3px 9px;
  border: 1px solid #adadad;
  background: #e1e1e1;
  color: #777;
}

.search-btn svg {
  width: 42px;
  height: 42px;
}

.caret {
  position: absolute;
  left: 9px;
  top: 3px;
  width: 1px;
  height: 32px;
  background: #000;
}

/* rotated tabs on the right edge */
.side-tabs {
  display: flex;
  flex-direction: column;
  width: 50px;
  padding-top: 5px;
}

.side-tabs span {
  height: 126px;
  padding: 3px 12px 0 0;
  border-right: 3px solid #c6c6c6;
  writing-mode: vertical-rl;
  font-size: 23px;
  line-height: 32px;
  white-space: nowrap;
  color: #222;
}

.side-tabs .t2 {
  height: 216px;
  margin: 21px 0;
}

.side-tabs .t3 {
  height: 139px;
}

.statusbar {
  height: 38px;
  padding: 6px 6px 0;
  border-left: 1px solid #999;
  font-family: "Open Sans", sans-serif;
  font-size: 22px;
  line-height: 30px;
  letter-spacing: -0.2px;
}

/* message box */
.highlight {
  position: absolute;
  left: 1362px;
  top: 797px;
  width: 564px;
  height: 370px;
  padding: 8px 5px;
  border: 4px solid #f5492a;
  border-radius: 9px;
}

.dialog {
  display: flex;
  flex-direction: column;
  height: 347px;
  padding: 0 12px 11px;
  border: 1px solid #111;
  border-radius: 6px 6px 0 0;
  background: linear-gradient(#9ab5d3 0, #a3bddb 42px, #b9d1ea 58px, #b9d1ea 90px, #dbe8f5 148px, #b9d1ea 149px);
  box-shadow: inset -1px -1px #35d0e6, inset 1px 1px #e8f1fa;
  font-family: "Open Sans", sans-serif;
  font-size: 23.5px;
  letter-spacing: -0.38px;
  color: #1c1c1c;
}

.dialog-title {
  display: flex;
  justify-content: space-between;
  height: 57px;
  padding: 14px 2px 0 4px;
  color: #000;
}

.dialog-title span {
  padding-top: 6px;
}

.dialog-close {
  display: flex;
  align-items: center;
  justify-content: center;
  width: 68px;
  height: 40px;
  border: 1px solid #5a1a20;
  border-radius: 2px;
  box-shadow: inset 0 0 0 1px #e8a79c;
  background: linear-gradient(#e4a093, #dc8a7b 40%, #b83f2a 41%, #bd4a35 80%, #d27461);
}

.dialog-close svg {
  width: 24px;
  height: 20px;
}

.dialog-body {
  display: flex;
  height: 177px;
  padding: 62px 0 0 23px;
  border-bottom: 1px solid #c8c8c8;
  background: #fafafa;
}

.dialog-body p {
  margin: -4px 0 0 25px;
  white-space: nowrap;
}

.warn {
  flex: none;
  width: 62px;
  height: 56px;
}

.dialog-foot {
  flex: 1;
  padding: 27px 13px 0;
  background: #f3f3f3;
  text-align: right;
}

.dialog-foot button {
  width: 163px;
  height: 56px;
  padding-top: 3px;
  border: 1px solid #0f62bd;
  background: #d9e3f3;
  color: #1c1c1c;
  font: inherit;
}

/* annotations */
.arrow {
  position: absolute;
  fill: none;
  stroke: #f5492a;
  stroke-width: 3.5;
}

.arrow-tab {
  left: 470px;
  top: 40px;
  width: 110px;
  height: 110px;
}

.arrow-job {
  left: 2455px;
  top: 1080px;
  width: 200px;
  height: 90px;
}
```
